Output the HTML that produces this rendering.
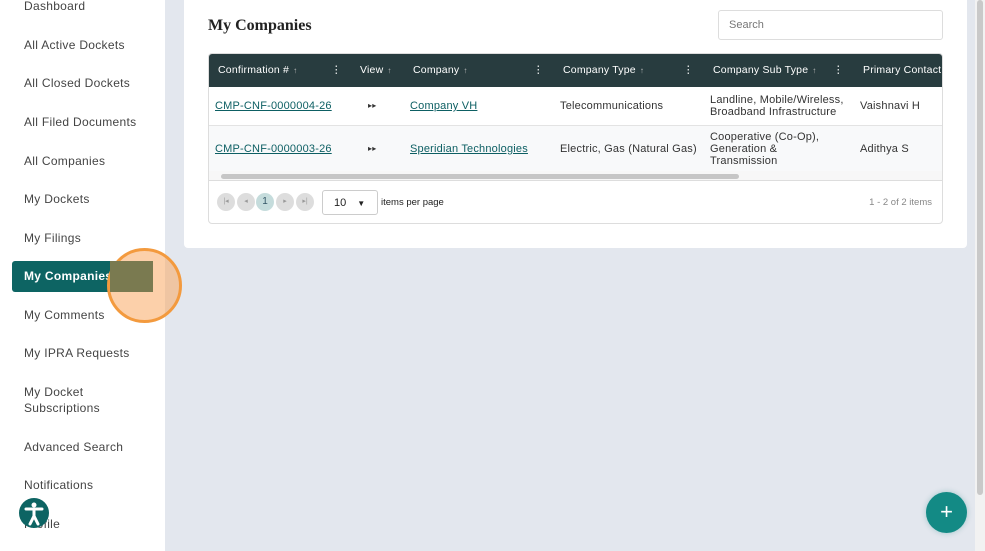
<!DOCTYPE html>
<html><head><meta charset="utf-8"><style>
*{box-sizing:border-box;margin:0;padding:0}
body{width:985px;height:551px;overflow:hidden;background:#e3e7ee;font-family:"Liberation Sans",sans-serif;position:relative}
.side{position:absolute;left:0;top:0;width:165px;height:551px;background:#fff}
.it{position:absolute;left:24px;font-size:12px;color:#444;letter-spacing:.3px;line-height:16px}
.act{position:absolute;left:12px;top:261px;width:141px;height:31px;background:#0d6463;border-radius:3px}
.card{position:absolute;left:184px;top:-10px;width:783px;height:258px;background:#fff;border-radius:4px}
h1{position:absolute;left:208px;top:17px;font-family:"Liberation Serif",serif;font-size:16px;font-weight:bold;color:#222}
.search{position:absolute;left:718px;top:10px;width:225px;height:30px;border:1px solid #ddd;border-radius:3px;font-size:11px;color:#777;padding:8px 10px}
.tbl{position:absolute;left:208px;top:53px;width:735px;height:171px;border:1px solid #ddd;border-radius:4px;overflow:hidden}
.hd{position:absolute;left:0;top:0;width:735px;height:33px;background:#283c3f;color:#fff;font-size:10.5px;letter-spacing:.2px}
.hd > span{position:absolute;top:10px;white-space:nowrap}
.ar{font-size:8px;color:#bbb;margin-left:4px}
.r{position:absolute;left:0;width:735px;font-size:11px;color:#333;letter-spacing:.2px}
.r span{position:absolute;white-space:nowrap;line-height:12px}
a{color:#0d5f63;text-decoration:underline}
.pb{position:absolute;top:139px;width:18px;height:18px;border-radius:50%;background:#ddd;font-size:7px;color:#999;text-align:center;line-height:18px}
</style></head><body>
<div class="side">
<div class="act"></div>
<div class="it" style="top:-2px">Dashboard</div>
<div class="it" style="top:37px">All Active Dockets</div>
<div class="it" style="top:75px">All Closed Dockets</div>
<div class="it" style="top:114px">All Filed Documents</div>
<div class="it" style="top:153px">All Companies</div>
<div class="it" style="top:191px">My Dockets</div>
<div class="it" style="top:230px">My Filings</div>
<div class="it" style="top:268px;color:#fff;font-weight:bold">My Companies</div>
<div class="it" style="top:307px">My Comments</div>
<div class="it" style="top:345px">My IPRA Requests</div>
<div class="it" style="top:384px">My Docket<br>Subscriptions</div>
<div class="it" style="top:439px">Advanced Search</div>
<div class="it" style="top:477px">Notifications</div>
<div class="it" style="top:516px">Profile</div>
</div>
<div style="position:absolute;left:107px;top:248px;width:75px;height:75px;border-radius:50%;border:3px solid #f39a3e;background:rgba(250,170,100,.55)"></div>
<div style="position:absolute;left:110px;top:261px;width:43px;height:31px;background:#7a7a50"></div>
<div style="position:absolute;left:19px;top:498px;width:30px;height:30px;border-radius:50%;background:#0d6463">
<svg width="30" height="30" viewBox="0 0 30 30"><circle cx="15" cy="7" r="2.5" fill="#fff"/><path d="M7 11 L23 11 M15 11 V18 M15 18 L11 26 M15 18 L19 26" stroke="#fff" stroke-width="3" stroke-linecap="round" fill="none"/></svg></div>
<div class="card"></div>
<h1>My Companies</h1>
<div class="search">Search</div>
<div class="tbl">
<div class="hd">
<span style="left:9px">Confirmation #<span class="ar">↑</span></span><span style="left:122px">⋮</span>
<span style="left:151px">View<span class="ar">↑</span></span>
<span style="left:204px">Company<span class="ar">↑</span></span><span style="left:324px">⋮</span>
<span style="left:354px">Company Type<span class="ar">↑</span></span><span style="left:474px">⋮</span>
<span style="left:504px">Company Sub Type<span class="ar">↑</span></span><span style="left:624px">⋮</span>
<span style="left:654px">Primary Contact</span>
</div>
<div class="r" style="top:33px;height:39px;border-bottom:1px solid #e3e3e3">
<span style="left:6px;top:13px"><a>CMP-CNF-0000004-26</a></span><span style="left:159px;top:13px;font-size:8px">▸▸</span>
<span style="left:201px;top:13px"><a>Company VH</a></span><span style="left:351px;top:13px">Telecommunications</span>
<span style="left:501px;top:7px">Landline, Mobile/Wireless,<br>Broadband Infrastructure</span><span style="left:651px;top:13px">Vaishnavi H</span>
</div>
<div class="r" style="top:72px;height:45px;background:#f8f9fa">
<span style="left:6px;top:17px"><a>CMP-CNF-0000003-26</a></span><span style="left:159px;top:17px;font-size:8px">▸▸</span>
<span style="left:201px;top:17px"><a>Speridian Technologies</a></span><span style="left:351px;top:17px">Electric, Gas (Natural Gas)</span>
<span style="left:501px;top:5px">Cooperative (Co-Op),<br>Generation &amp;<br>Transmission</span><span style="left:651px;top:17px">Adithya S</span>
</div>
<div style="position:absolute;left:0;top:117px;width:735px;height:10px;background:#f7f7f7;border-bottom:1px solid #ddd"><div style="position:absolute;left:12px;top:3px;width:518px;height:5px;border-radius:3px;background:#c6c6c6"></div></div>
<div class="pb" style="left:8px">|◂</div><div class="pb" style="left:28px">◂</div>
<div class="pb" style="left:47px;background:#c5dcdc;color:#356;font-size:10px">1</div>
<div class="pb" style="left:67px">▸</div><div class="pb" style="left:87px">▸|</div>
<div style="position:absolute;left:113px;top:136px;width:56px;height:25px;border:1px solid #ccc;border-radius:3px;font-size:11px;color:#222;padding:6px 11px">10 <span style="font-size:8px;margin-left:8px">▼</span></div>
<div style="position:absolute;left:172px;top:143px;font-size:9.5px;color:#222">items per page</div>
<div style="position:absolute;right:10px;top:143px;font-size:9.5px;color:#888">1 - 2 of 2 items</div>
</div>
<div style="position:absolute;left:975px;top:0;width:10px;height:551px;background:#f2f2f2"><div style="position:absolute;left:2px;top:0;width:6px;height:495px;background:#c9c9c9;border-radius:3px"></div></div>
<div style="position:absolute;left:926px;top:492px;width:41px;height:41px;border-radius:50%;background:#138a85;color:#fff;font-size:22px;text-align:center;line-height:40px;box-shadow:0 0 6px rgba(0,120,120,.3)">+</div>
</body></html>
